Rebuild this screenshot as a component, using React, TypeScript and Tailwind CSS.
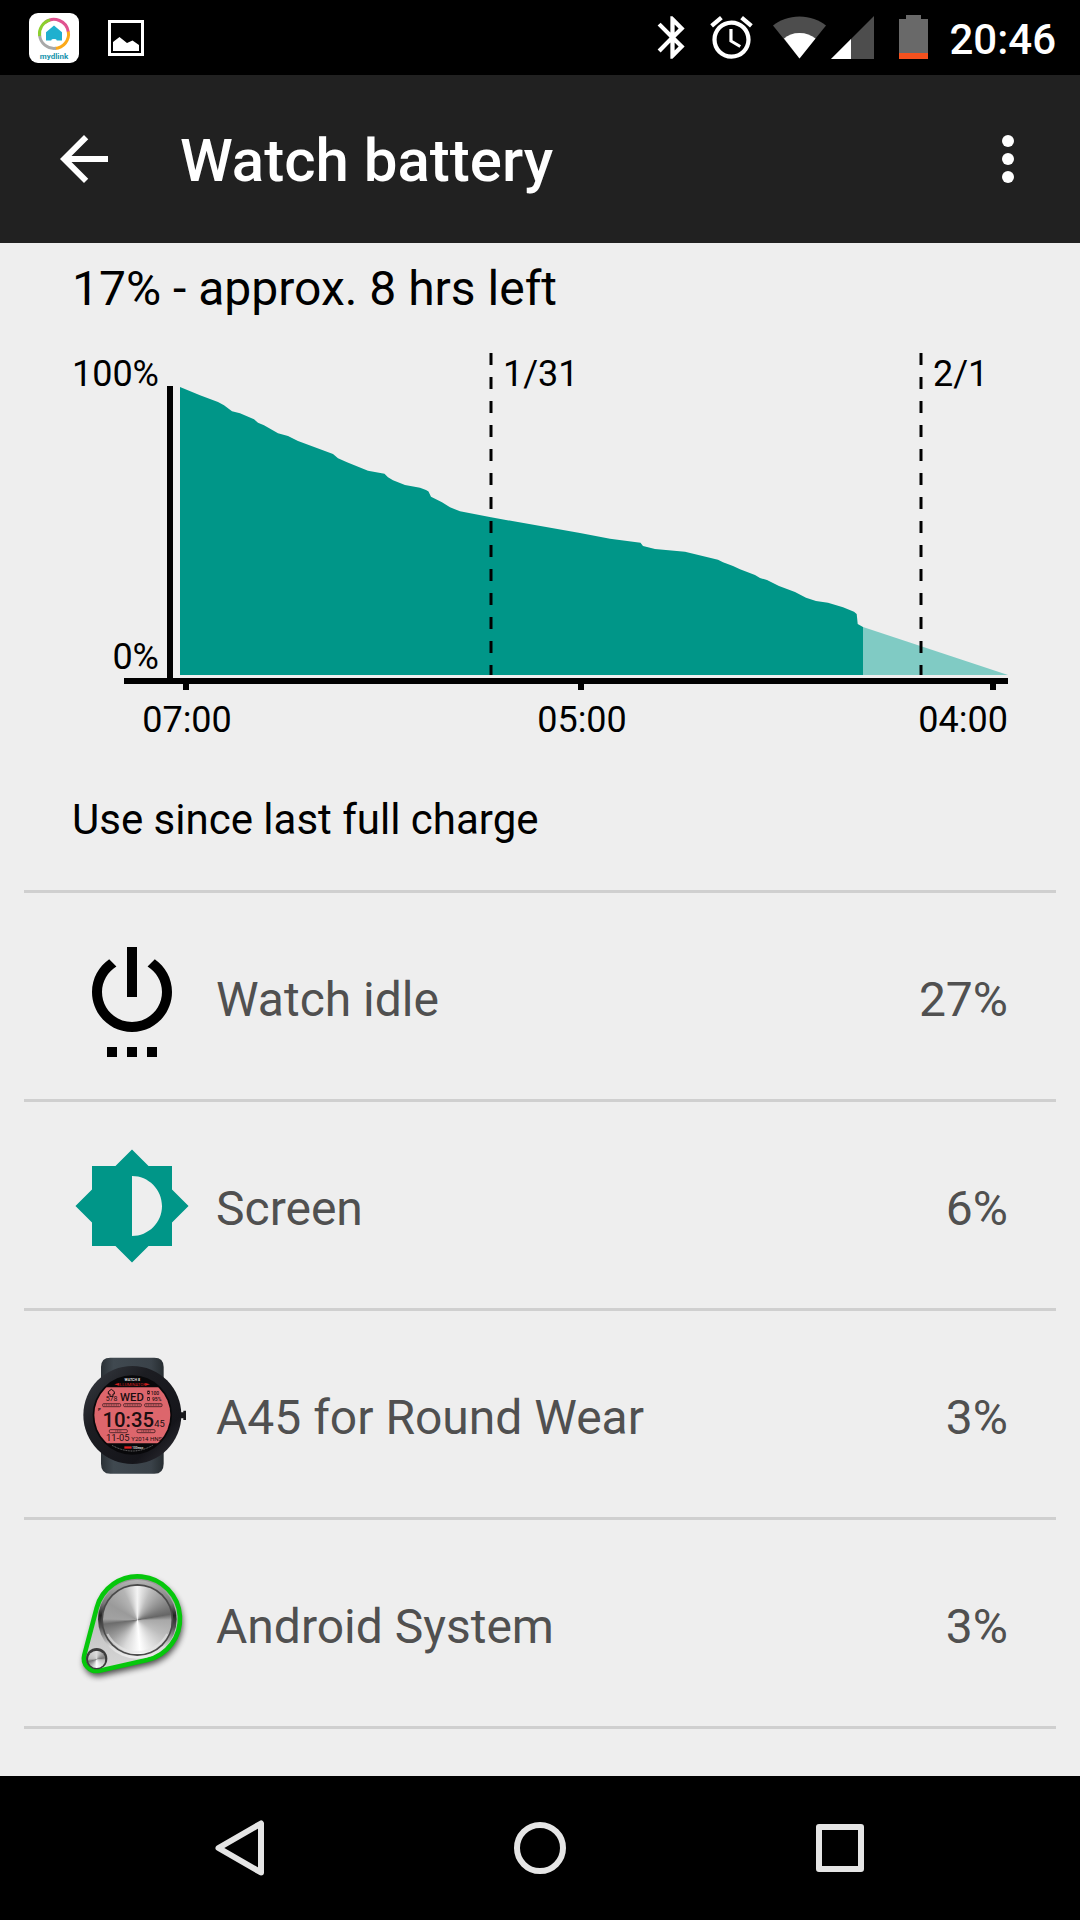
import React from 'react';

type Usage = { name: string; percent: string; icon: React.ReactNode };

function MydlinkIcon() {
  return (
    <svg viewBox="0 0 50 50" className="h-[50px] w-[50px]" role="img" aria-label="mydlink">
      <rect width="50" height="50" rx="9" fill="#fff" />
      <g fill="none" strokeWidth="3">
        <path d="M16 9.500A14.500 14.500 0 0 1 39.300 19" stroke="#e0528f" />
        <path d="M39.300 18.500A14.500 14.500 0 0 1 26 35.500" stroke="#fba919" />
        <path d="M27 35.300A14.500 14.500 0 0 1 10.600 22" stroke="#a9a9a9" />
        <path d="M10.600 23A14.500 14.500 0 0 1 21 7" stroke="#8ccf2e" />
      </g>
      <path d="M25 12.500l8 6.700v8.300h-5.200a2.800 1.400 0 0 0-5.600 0H17v-8.300z" fill="#1fb0cf" />
      <text x="25" y="46" textAnchor="middle" fontSize="8" fontWeight="700" fill="#1894ad">
        mydlink
      </text>
    </svg>
  );
}

function ScreenshotIcon() {
  return (
    <svg viewBox="0 0 36 36" className="h-9 w-9" role="img" aria-label="Screenshot captured">
      <rect x="1.5" y="1.5" width="33" height="33" fill="none" stroke="#fff" strokeWidth="3" />
      <path d="M5 31V22l6.500-5 7.500 6 5.500-2.500L31 25v6z" fill="#fff" />
    </svg>
  );
}

function StatusBar() {
  return (
    <header className="flex h-[75px] items-center justify-between bg-black pl-[29px] pr-6 text-white">
      <div className="flex items-center gap-[29px]">
        <MydlinkIcon />
        <ScreenshotIcon />
      </div>
      <div className="flex items-center">
        <svg viewBox="0 0 24 24" className="size-[51px]" fill="#fff" role="img" aria-label="Bluetooth">
          <path d="M17.710 7.710L12 2h-1v7.590L6.410 5 5 6.410 10.590 12 5 17.590 6.410 19 11 14.410V22h1l5.710-5.710-4.300-4.290 4.300-4.290zM13 5.830l1.880 1.880L13 9.590V5.830zm1.880 10.460L13 18.170v-3.760l1.880 1.880z" />
        </svg>
        <svg viewBox="0 0 24 24" className="ml-2 size-[51px]" fill="#fff" role="img" aria-label="Alarm set">
          <path d="M22 5.720l-4.600-3.860-1.290 1.530 4.600 3.860L22 5.720zM7.880 3.390L6.600 1.860 2 5.710l1.290 1.530 4.590-3.850zM12.500 8H11v6l4.750 2.850.75-1.230-4-2.370V8zM12 4c-4.970 0-9 4.030-9 9s4.020 9 9 9a9 9 0 1 0 0-18zm0 16c-3.870 0-7-3.130-7-7s3.130-7 7-7 7 3.130 7 7-3.130 7-7 7z" />
        </svg>
        <svg viewBox="0 0 53 51" className="ml-4 h-[51px] w-[53px]" role="img" aria-label="Wi-Fi">
          <path d="M26.500 46.500L0 13.500C7 8 16 4.500 26.500 4.500S46 8 53 13.500z" fill="#4d4d4d" />
          <path d="M26.500 46.500L11 26.500c4-3.500 9-5.500 15.500-5.500S38 23 42.500 26.500z" fill="#fff" />
        </svg>
        <svg viewBox="0 0 43 51" className="ml-[5px] h-[51px] w-[43px]" role="img" aria-label="Mobile signal">
          <path d="M0 47L43 4v43z" fill="#4d4d4d" />
          <path d="M0 47l20-20v20z" fill="#fff" />
        </svg>
        <svg viewBox="0 0 29 51" className="ml-[25px] h-[51px] w-[29px]" role="img" aria-label="Battery low">
          <path d="M0 7h7V3h15v4h7v34H0z" fill="#696969" />
          <path d="M0 41h29v6H0z" fill="#f4511e" />
        </svg>
        <time className="ml-[21px] pt-1 text-[42px] font-medium leading-[48px]">20:46</time>
      </div>
    </header>
  );
}

function AppBar() {
  return (
    <div className="flex h-[168px] items-center bg-[#212121] px-9 text-white">
      <button aria-label="Back" className="ml-3">
        <svg viewBox="0 0 24 24" className="size-[72px]" fill="currentColor">
          <path d="M20 11H7.830l5.590-5.590L12 4l-8 8 8 8 1.410-1.410L7.830 13H20v-2z" />
        </svg>
      </button>
      <h1 className="ml-[60px] flex-1 pt-1 text-[60px] font-medium leading-[72px]">Watch battery</h1>
      <button aria-label="More options">
        <svg viewBox="0 0 24 24" className="size-[72px]" fill="currentColor">
          <circle cx="12" cy="6" r="2" />
          <circle cx="12" cy="12" r="2" />
          <circle cx="12" cy="18" r="2" />
        </svg>
      </button>
    </div>
  );
}

const HISTORY =
  '180,387 200,395.3 218,402 224,405.3 232,411.3 240,413.3 254,419.3 258,422.7 264,425.3 278,433.3 288,436 298,441 333,454 338,458.3 347,462.3 368,470.7 384.500,473.7 388,477.3 393,480.3 405,485 420,487.7 426,490 428.500,491.500 431,496.7 442,502.3 450,507.3 460,511.3 491,517.3 580,533 610,538.7 640.500,542.7 643,546 655,549 685,551.7 718,559.7 723,562.3 733,566 740,569.3 755,575 760,578 767,580 779,586 795,592 806,597.7 816,601 828,602.7 843,607.3 854,611.7 856.700,614 857.700,624 863,627 863,675 180,675';

function BatteryChart() {
  return (
    <svg
      viewBox="72 341 936 403"
      className="mt-6 block h-auto w-full overflow-visible"
      role="img"
      aria-label="Battery level over time"
    >
      <polygon points={HISTORY} fill="#009688" />
      <polygon points="863,627 1008,675 863,675" fill="#80cbc4" />
      <g stroke="#000" strokeWidth="3" strokeDasharray="12 12">
        <path d="M491 353V675" />
        <path d="M921 353V675" />
      </g>
      <g fill="#000">
        <rect x="167" y="386" width="6" height="292" />
        <rect x="124" y="678" width="884" height="6" />
        <rect x="183" y="684" width="6" height="6" />
        <rect x="578" y="684" width="6" height="6" />
        <rect x="990" y="684" width="6" height="6" />
      </g>
      <g fill="#000" fontSize="36">
        <text x="159" y="386" textAnchor="end">100%</text>
        <text x="159" y="669" textAnchor="end">0%</text>
        <text x="503" y="386">1/31</text>
        <text x="933" y="386">2/1</text>
        <text x="187" y="732" textAnchor="middle">07:00</text>
        <text x="582" y="732" textAnchor="middle">05:00</text>
        <text x="1008" y="732" textAnchor="end">04:00</text>
      </g>
    </svg>
  );
}

function PowerIcon() {
  return (
    <svg viewBox="0 0 24 24" className="size-[120px]" fill="#000" aria-hidden="true">
      <path d="M7 24h2v-2H7v2zm4 0h2v-2h-2v2zm2-22h-2v10h2V2zm3.560 2.440l-1.450 1.450C16.840 6.940 18 8.830 18 11c0 3.310-2.690 6-6 6s-6-2.690-6-6c0-2.170 1.160-4.060 2.880-5.120L7.440 4.440C5.360 5.880 4 8.280 4 11c0 4.420 3.580 8 8 8s8-3.580 8-8c0-2.720-1.360-5.120-3.440-6.560zM15 24h2v-2h-2v2z" />
    </svg>
  );
}

function ScreenIcon() {
  return (
    <svg viewBox="0 0 24 24" className="size-[120px]" fill="#009688" aria-hidden="true">
      <path d="M20 15.310L23.310 12 20 8.690V4h-4.690L12 .69 8.690 4H4v4.690L.69 12 4 15.310V20h4.690L12 23.310 15.310 20H20v-4.690zM12 18V6c3.310 0 6 2.690 6 6s-2.690 6-6 6z" />
    </svg>
  );
}

function WatchIcon() {
  return (
    <svg viewBox="6 30 360 360" className="size-[120px]" aria-hidden="true">
      <defs>
        <linearGradient id="strap" x1="0" x2="1" y1="0" y2="0">
          <stop offset="0" stopColor="#2b3136" />
          <stop offset="0.2" stopColor="#404950" />
          <stop offset="0.8" stopColor="#3a4249" />
          <stop offset="1" stopColor="#262c30" />
        </linearGradient>
        <linearGradient id="bezel" x1="0" x2="1" y1="0" y2="1">
          <stop offset="0" stopColor="#3a3e45" />
          <stop offset="0.35" stopColor="#1c1d22" />
          <stop offset="0.75" stopColor="#15151a" />
          <stop offset="1" stopColor="#35343c" />
        </linearGradient>
        <clipPath id="lcd">
          <rect x="70" y="127" width="234" height="168" />
        </clipPath>
      </defs>
      <path d="M93 130V66q0-28 28-28h132q28 0 28 28v64zM93 290v66q0 30 28 30h132q28 0 28-30v-66z" fill="url(#strap)" />
      <path d="M328 202h12v-5h8v28h-8v-5h-12z" fill="#18181b" />
      <circle cx="187" cy="210" r="147" fill="url(#bezel)" />
      <circle cx="187" cy="210" r="119" fill="#08080a" />
      <circle cx="187" cy="210" r="114" fill="#dd666c" clipPath="url(#lcd)" />
      <text x="187" y="109" textAnchor="middle" fontSize="11" fontWeight="700" fill="#ddd">WATCH 8</text>
      <path d="M133 118l14-4v8zM240 118l-14-4v8z" fill="#d31e1e" />
      <text x="187" y="123" textAnchor="middle" fontSize="13" fill="#d31e1e">ILLUMINATOR</text>
      <g fill="#1b0e10">
        <path d="M124 133l9 7v7h-4v7h-9v-7h-5v-7z" fill="none" stroke="#1b0e10" strokeWidth="3" />
        <text x="107" y="169" fontSize="21">578</text>
        <text x="186" y="167" textAnchor="middle" fontSize="34" fontWeight="500">WED</text>
        <g fill="none" stroke="#1b0e10" strokeWidth="2">
          <rect x="233" y="138" width="5" height="9" />
          <rect x="233" y="157" width="5" height="9" />
        </g>
        <text x="242" y="149" fontSize="15" fontWeight="500">100</text>
        <text x="246" y="168" fontSize="15" fontWeight="500">95%</text>
        <g fill="none" stroke="#1b0e10" strokeWidth="2">
          <rect x="98" y="176" width="54" height="9" rx="3" />
          <rect x="161" y="176" width="53" height="9" rx="3" />
          <rect x="224" y="176" width="52" height="9" rx="3" />
          <rect x="118" y="254" width="54" height="9" rx="3" />
          <rect x="201" y="254" width="54" height="9" rx="3" />
          <path d="M103 180h44M166 180h43M229 180h42M136 258h18M214 258h28" strokeDasharray="3 2" />
        </g>
        <text x="84" y="198" fontSize="13" fontWeight="700">P</text>
        <text x="252" y="245" textAnchor="end" fontSize="61" fontWeight="500">10:35</text>
        <text x="253" y="245" fontSize="28">45</text>
        <text x="108" y="289" fontSize="28">11-05</text>
        <text x="184" y="288" fontSize="18">Y2014 HNS</text>
      </g>
      <path d="M163 304h22v7h-22z" fill="#e02020" />
      <text x="187" y="312" fontSize="9" fontWeight="700" fill="#ccc">100max</text>
      <path d="M126 301q61 34 122 0" fill="none" stroke="#777" strokeWidth="3" strokeDasharray="3 2" />
    </svg>
  );
}

function AndroidSystemIcon() {
  const belt = 'M80 144A127 127 0 1 1 231 300L88 332A38 38 0 0 1 43 285Z';
  return (
    <svg viewBox="6 12 360 360" className="size-[120px] overflow-visible" aria-hidden="true">
      <defs>
        <linearGradient id="plate" x1="0" x2="0" y1="0" y2="1">
          <stop offset="0" stopColor="#8f8f8f" />
          <stop offset="0.4" stopColor="#bdbdbd" />
          <stop offset="1" stopColor="#d8d8d8" />
        </linearGradient>
        <linearGradient id="rim" x1="0" x2="0" y1="0" y2="1">
          <stop offset="0" stopColor="#b5b5b5" />
          <stop offset="0.3" stopColor="#777" />
          <stop offset="0.45" stopColor="#222" />
          <stop offset="0.6" stopColor="#555" />
          <stop offset="0.85" stopColor="#dadada" />
          <stop offset="1" stopColor="#eee" />
        </linearGradient>
        <filter id="shadow" x="-20%" y="-20%" width="140%" height="140%">
          <feGaussianBlur stdDeviation="9" />
        </filter>
      </defs>
      <path d={belt} transform="translate(4 12)" fill="#000" stroke="#000" strokeWidth="8" opacity="0.7" filter="url(#shadow)" />
      <path d={belt} fill="url(#plate)" stroke="#06c70c" strokeWidth="14" />
      <circle cx="202" cy="178" r="118" fill="url(#rim)" />
      <circle cx="202" cy="180" r="108" fill="#4a4a4a" />
      <foreignObject x="99" y="77" width="206" height="206">
        <div className="h-[206px] w-[206px] rounded-full bg-[conic-gradient(from_0deg,#f4f4f4_0deg,#bcbcbc_25deg,#8e8e8e_55deg,#666666_80deg,#a8a8a8_90deg,#bdbdbd_120deg,#e0e0e0_150deg,#ffffff_175deg,#d9d9d9_205deg,#9c9c9c_235deg,#6c6c6c_263deg,#a2a2a2_272deg,#9a9a9a_300deg,#b5b5b5_335deg,#f4f4f4_360deg)]" />
      </foreignObject>
      <path d="M112 222A102 102 0 0 0 292 222" fill="none" stroke="#e6e6e6" strokeWidth="7" opacity="0.6" />
      <circle cx="80" cy="296" r="32" fill="#3c3c3c" />
      <foreignObject x="54" y="272" width="52" height="52">
        <div className="h-[52px] w-[52px] rounded-full bg-[conic-gradient(from_0deg,#dddddd,#777777_80deg,#bbbbbb_95deg,#ffffff_180deg,#777777_255deg,#bbbbbb_275deg,#dddddd)]" />
      </foreignObject>
    </svg>
  );
}

const USAGE: Usage[] = [
  { name: 'Watch idle', percent: '27%', icon: <PowerIcon /> },
  { name: 'Screen', percent: '6%', icon: <ScreenIcon /> },
  { name: 'A45 for Round Wear', percent: '3%', icon: <WatchIcon /> },
  { name: 'Android System', percent: '3%', icon: <AndroidSystemIcon /> },
];

function NavigationBar() {
  return (
    <nav className="flex h-36 items-center bg-black px-[90px]" aria-label="System navigation">
      <button aria-label="Back" className="flex flex-1 justify-center">
        <svg viewBox="0 0 72 72" className="size-[72px]" fill="none" stroke="#e5e5e5" strokeWidth="6" strokeLinejoin="round">
          <path d="M57 11.500v49L14.500 36z" />
        </svg>
      </button>
      <button aria-label="Home" className="flex flex-1 justify-center">
        <svg viewBox="0 0 72 72" className="size-[72px]" fill="none" stroke="#e5e5e5" strokeWidth="6">
          <circle cx="36" cy="36" r="23" />
        </svg>
      </button>
      <button aria-label="Recent apps" className="flex flex-1 justify-center">
        <svg viewBox="0 0 72 72" className="size-[72px]" fill="none" stroke="#e5e5e5" strokeWidth="6" strokeLinejoin="round">
          <rect x="15" y="15" width="42" height="42" />
        </svg>
      </button>
    </nav>
  );
}

export default function App() {
  return (
    <div className="flex min-h-screen flex-col bg-[#eeeeee] font-[Roboto,sans-serif] text-black">
      <StatusBar />
      <AppBar />
      <main className="flex-1 px-6">
        <section className="px-12 pt-[18px]">
          <h2 className="text-[48px] leading-[56px]">17% - approx. 8 hrs left</h2>
          <BatteryChart />
          <h3 className="pb-[46px] pt-[52px] text-[42px] leading-[48px]">Use since last full charge</h3>
        </section>
        <ul className="border-t-[3px] border-[#cfcfcf]">
          {USAGE.map((item) => (
            <li
              key={item.name}
              className="flex h-[209px] items-center gap-6 border-b-[3px] border-[#cfcfcf] px-12 pt-[2px] text-[48px] leading-[56px] text-[#505050]"
            >
              {item.icon}
              <span className="flex-1 pt-1.5">{item.name}</span>
              <span className="pt-1.5">{item.percent}</span>
            </li>
          ))}
        </ul>
      </main>
      <NavigationBar />
    </div>
  );
}
